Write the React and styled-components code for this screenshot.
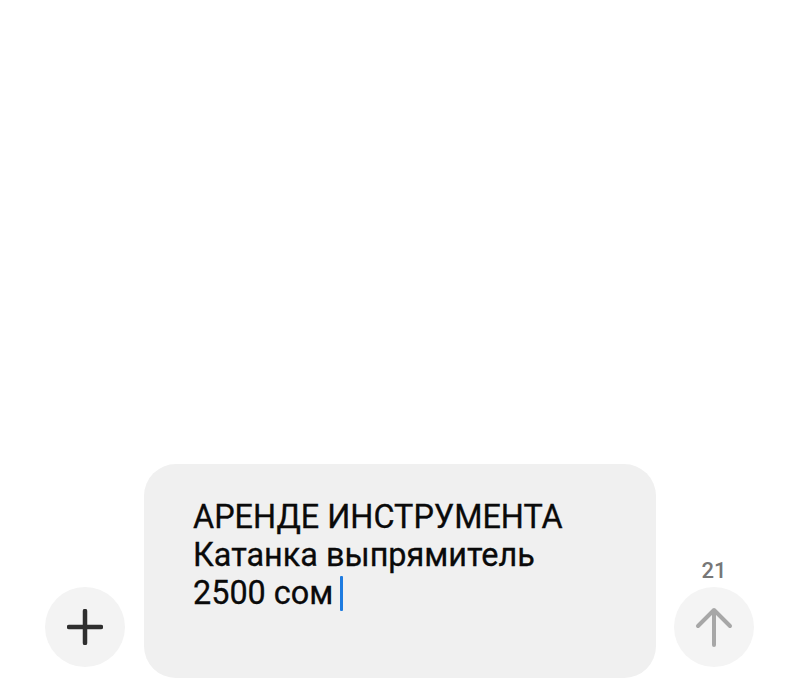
import React from "react";
import styled, { createGlobalStyle } from "styled-components";

const Global = createGlobalStyle`
  html, body {
    margin: 0;
    padding: 0;
    background: #ffffff;
    font-family: Roboto, "Noto Sans", sans-serif;
  }
`;

const Screen = styled.div`
  width: 800px;
  height: 700px;
  display: flex;
  flex-direction: column;
  justify-content: flex-end;
  box-sizing: border-box;
  padding-bottom: 22px;
`;

const Composer = styled.div`
  display: flex;
  align-items: flex-end;
  padding-left: 45px;
`;

const RoundButton = styled.button`
  width: 80px;
  height: 80px;
  border-radius: 50%;
  border: none;
  padding: 0;
  background: #f3f3f3;
  display: flex;
  align-items: center;
  justify-content: center;
  flex-shrink: 0;
`;

const PlusButton = styled(RoundButton)`
  margin-bottom: 11px;
  margin-right: 19px;
`;

const Bubble = styled.div`
  width: 512px;
  box-sizing: border-box;
  background: #f0f0f0;
  border-radius: 32px;
  padding: 34px 30px 66px 49px;
  font-size: 32.4px;
  line-height: 38px;
  color: #0a0a0a;
  -webkit-text-stroke: 0.3px #0a0a0a;
`;

const Caret = styled.span`
  display: inline-block;
  width: 3px;
  height: 35px;
  background: #1e7be0;
  vertical-align: -7px;
  margin-left: 7px;
  border-radius: 1px;
  -webkit-text-stroke: 0;
`;

const SendColumn = styled.div`
  display: flex;
  flex-direction: column;
  align-items: center;
  margin-left: 18px;
  margin-bottom: 11px;
  gap: 3px;
`;

const Counter = styled.span`
  font-size: 22px;
  font-weight: 500;
  color: #777777;
  line-height: 26px;
`;

const SendButton = styled(RoundButton)`
  background: #f4f4f4;
`;

export default function App() {
  return (
    <>
      <Global />
      <Screen>
        <Composer>
          <PlusButton>
            <svg width="36" height="36" viewBox="0 0 36 36">
              <path d="M18 2v32M2 18h32" stroke="#2e2e2e" strokeWidth="4.5" strokeLinecap="round" />
            </svg>
          </PlusButton>
          <Bubble>
            АРЕНДЕ ИНСТРУМЕНТА
            <br />
            Катанка выпрямитель
            <br />
            2500 сом
            <Caret />
          </Bubble>
          <SendColumn>
            <Counter>21</Counter>
            <SendButton>
              <svg width="40" height="40" viewBox="0 0 40 40">
                <path
                  d="M20 38V3M4 19L20 3l16 16"
                  fill="none"
                  stroke="#a7a7a7"
                  strokeWidth="4"
                  strokeLinecap="round"
                  strokeLinejoin="round"
                />
              </svg>
            </SendButton>
          </SendColumn>
        </Composer>
      </Screen>
    </>
  );
}
